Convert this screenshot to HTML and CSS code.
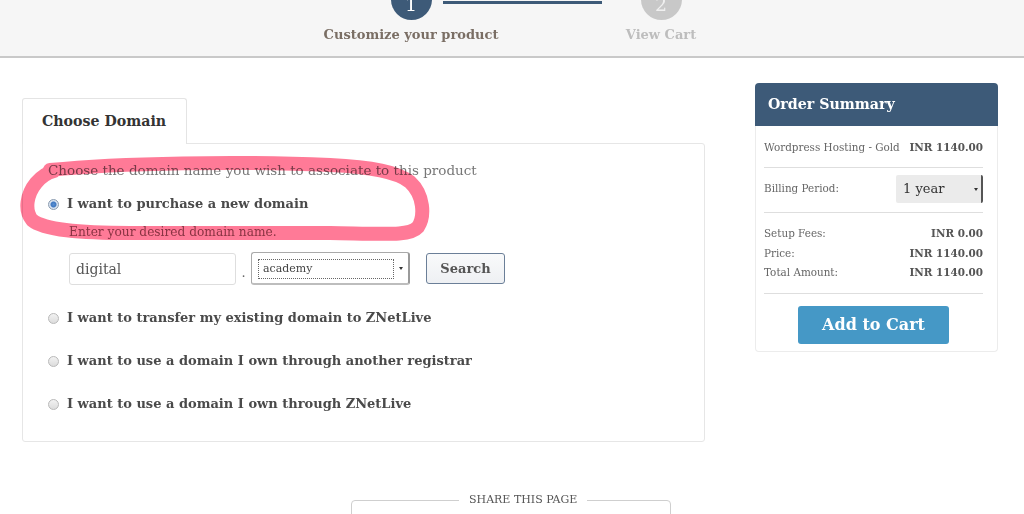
FILE: index.html
```html
<!DOCTYPE html>
<html>
<head>
<meta charset="utf-8">
<link rel="stylesheet" href="styles.css">
</head>
<body>
<header class="topbar">
  <div class="steps">
    <div class="step-line"></div>
    <div class="step">
      <div class="circle active"><span>1</span></div>
      <div class="step-label">Customize your product</div>
    </div>
    <div class="step">
      <div class="circle"><span>2</span></div>
      <div class="step-label muted">View Cart</div>
    </div>
  </div>
</header>

<main class="main">
  <section class="left">
    <div class="tab">Choose Domain</div>
    <div class="panel">
      <p class="desc">Choose the domain name you wish to associate to this product</p>
      <div class="opt first"><span class="radio checked"></span><span class="opt-label">I want to purchase a new domain</span></div>
      <p class="hint">Enter your desired domain name.</p>
      <div class="domain-row">
        <div class="text-input">digital</div>
        <span class="dot">.</span>
        <div class="tld-select"><span class="tld-focus">academy</span><span class="tld-arrow"></span></div>
        <div class="search-btn">Search</div>
      </div>
      <div class="opt"><span class="radio"></span><span class="opt-label">I want to transfer my existing domain to ZNetLive</span></div>
      <div class="opt"><span class="radio"></span><span class="opt-label">I want to use a domain I own through another registrar</span></div>
      <div class="opt"><span class="radio"></span><span class="opt-label">I want to use a domain I own through ZNetLive</span></div>
    </div>
  </section>

  <aside class="right">
    <div class="sum-head">Order Summary</div>
    <div class="sum-body">
      <div class="sum-row top"><span>Wordpress Hosting - Gold</span><b>INR 1140.00</b></div>
      <div class="divider"></div>
      <div class="sum-row billing"><span>Billing Period:</span><div class="period"><span>1 year</span><span class="p-arrow"></span></div></div>
      <div class="divider"></div>
      <div class="totals">
        <div class="sum-row"><span>Setup Fees:</span><b>INR 0.00</b></div>
        <div class="sum-row"><span>Price:</span><b>INR 1140.00</b></div>
        <div class="sum-row"><span>Total Amount:</span><b>INR 1140.00</b></div>
      </div>
      <div class="divider"></div>
      <div class="cart-wrap"><div class="cart-btn">Add to Cart</div></div>
    </div>
  </aside>
</main>

<fieldset class="share">
  <legend>SHARE THIS PAGE</legend>
</fieldset>

<svg class="annot" width="1024" height="514" viewBox="0 0 1024 514">
  <path d="M 50 170 C 120 163, 240 161, 330 165 C 372 167, 398 172, 410 182 C 424 195, 425 216, 418 227 C 410 236, 390 234, 330 233 L 130 233 C 80 233, 44 230, 32 220 C 24 210, 27 194, 36 183 C 41 177, 46 173, 54 171"
        fill="none" stroke="#ff7a97" stroke-width="14" stroke-linecap="round" stroke-linejoin="round"/>
</svg>
</body>
</html>
```

FILE: styles.css
```css
* { box-sizing: border-box; }

html, body {
  margin: 0;
  padding: 0;
}

body {
  width: 1024px;
  height: 514px;
  overflow: hidden;
  background: #ffffff;
  font-family: "DejaVu Serif", "Liberation Serif", serif;
  color: #555;
  position: relative;
}

/* ---------- top steps bar ---------- */
.topbar {
  height: 58px;
  background: #f6f6f6;
  border-bottom: 2px solid #c9c9c9;
  overflow: hidden;
}

.steps {
  position: relative;
  display: flex;
  gap: 50px;
  padding-left: 311px;
}

.step-line {
  position: absolute;
  left: 443px;
  top: 1px;
  width: 159px;
  height: 3px;
  background: #3d5a78;
}

.step {
  width: 200px;
  display: flex;
  flex-direction: column;
  align-items: center;
}

.circle {
  width: 41px;
  height: 41px;
  margin-top: -21px;
  border-radius: 50%;
  background: #c8c8c8;
  color: #f0f0f0;
  display: flex;
  align-items: flex-end;
  justify-content: center;
  padding-bottom: 6px;
  font-size: 19px;
  line-height: 20px;
}

.circle.active {
  background: #3d5a78;
  color: #ffffff;
}

.step-label {
  margin-top: 7px;
  font-size: 13px;
  line-height: 16px;
  font-weight: bold;
  color: #7a6e64;
}

.step-label.muted {
  color: #bdbdbd;
}

/* ---------- main layout ---------- */
.main {
  display: flex;
  align-items: flex-start;
  gap: 50px;
  padding: 25px 26px 0 22px;
}

.left {
  width: 683px;
  padding-top: 15px;
}

.tab {
  position: relative;
  z-index: 1;
  width: 165px;
  height: 46px;
  margin-bottom: -1px;
  padding-left: 19px;
  background: #fff;
  border: 1px solid #e4e4e4;
  border-bottom: none;
  border-radius: 3px 3px 0 0;
  font-size: 14.2px;
  line-height: 44px;
  font-weight: bold;
  color: #333;
}

.panel {
  height: 299px;
  border: 1px solid #e6e6e6;
  border-radius: 0 3px 3px 3px;
  padding: 17px 25px 0 25px;
}

.desc {
  margin: 0;
  font-size: 13.5px;
  line-height: 18px;
  color: #777;
}

.opt {
  display: flex;
  align-items: center;
  gap: 8px;
  height: 20px;
  margin-top: 23px;
}

.opt.first {
  margin-top: 15px;
}

.radio {
  width: 11px;
  height: 11px;
  border-radius: 50%;
  border: 1px solid #b9b9b9;
  background: linear-gradient(#f2f2f2, #dcdcdc);
  flex: none;
}

.radio.checked {
  border-color: #8a9bb0;
  background: radial-gradient(circle, #5a8fd0 0, #3f78c2 2.5px, #d9e3f0 3.5px, #cfd9e6 100%);
}

.opt-label {
  font-size: 13px;
  line-height: 20px;
  font-weight: bold;
  color: #4a4a4a;
}

.hint {
  margin: 10px 0 0 21px;
  font-size: 12.2px;
  line-height: 16px;
  color: #8a6a70;
}

.domain-row {
  display: flex;
  align-items: center;
  margin: 12px 0 0 21px;
  height: 33px;
}

.text-input {
  width: 167px;
  height: 32px;
  border: 1px solid #dedede;
  border-radius: 3px;
  padding-left: 6px;
  font-size: 14px;
  line-height: 30px;
  color: #555;
}

.dot {
  width: 15px;
  text-align: center;
  font-size: 13px;
  line-height: 20px;
  padding-top: 8px;
  color: #666;
}

.tld-select {
  position: relative;
  width: 159px;
  height: 33px;
  border: 1px solid #a9a9a9;
  border-right: 2px solid #9a9a9a;
  border-bottom: 2px solid #bdbdbd;
  border-radius: 3px;
  background: #fff;
  padding: 6px 0 0 6px;
}

.tld-focus {
  display: block;
  width: 136px;
  height: 20px;
  border: 1px dotted #666;
  padding-left: 4px;
  font-size: 11px;
  line-height: 18px;
  color: #444;
}

.tld-arrow {
  position: absolute;
  right: 5px;
  top: 14px;
  border-left: 2px solid transparent;
  border-right: 2px solid transparent;
  border-top: 3px solid #333;
}

.search-btn {
  margin-left: 16px;
  width: 79px;
  height: 31px;
  border: 1px solid #6b7f98;
  border-radius: 3px;
  background: linear-gradient(#f9fafb, #eef0f3);
  text-align: center;
  font-size: 13px;
  line-height: 29px;
  font-weight: bold;
  color: #555;
}

/* ---------- order summary ---------- */
.right {
  width: 243px;
}

.sum-head {
  height: 43px;
  background: #3d5a78;
  border-radius: 4px 4px 0 0;
  padding-left: 13px;
  font-size: 14.2px;
  line-height: 43px;
  font-weight: bold;
  color: #fff;
}

.sum-body {
  border: 1px solid #ececec;
  border-top: none;
  border-radius: 0 0 4px 4px;
  padding: 13px 14px 7px 8px;
}

.sum-row {
  display: flex;
  justify-content: space-between;
  align-items: center;
  white-space: nowrap;
  font-size: 10.4px;
  line-height: 19.5px;
  color: #666;
}

.sum-row b {
  color: #555;
}

.sum-row.top {
  line-height: 16px;
  margin-bottom: 12px;
}

.divider {
  border-top: 1px solid #dedede;
}

.sum-row.billing {
  margin: 7px 0 9px;
}

.period {
  position: relative;
  width: 87px;
  height: 28px;
  background: #ebebeb;
  border-right: 2px solid #555;
  border-radius: 2px;
  padding-left: 7px;
  font-size: 13px;
  line-height: 28px;
  color: #333;
}

.p-arrow {
  position: absolute;
  right: 3px;
  top: 13px;
  border-left: 2px solid transparent;
  border-right: 2px solid transparent;
  border-top: 3px solid #333;
}

.totals {
  padding: 11px 0 10px;
}

.cart-wrap {
  display: flex;
  justify-content: center;
  padding-top: 12px;
}

.cart-btn {
  width: 151px;
  height: 38px;
  background: #4598c6;
  border-radius: 3px;
  text-align: center;
  font-size: 16px;
  line-height: 38px;
  font-weight: bold;
  color: #fff;
}

/* ---------- share ---------- */
.share {
  width: 320px;
  height: 60px;
  margin: 51px 0 0 351px;
  padding: 0;
  border: 1px solid #cfcfcf;
  border-radius: 4px;
}

.share legend {
  margin: 0 0 0 107px;
  padding: 0 10px;
  font-size: 11px;
  line-height: 14px;
  color: #555;
}

/* ---------- hand-drawn annotation ---------- */
.annot {
  position: absolute;
  left: 0;
  top: 0;
  pointer-events: none;
  mix-blend-mode: multiply;
}
```
